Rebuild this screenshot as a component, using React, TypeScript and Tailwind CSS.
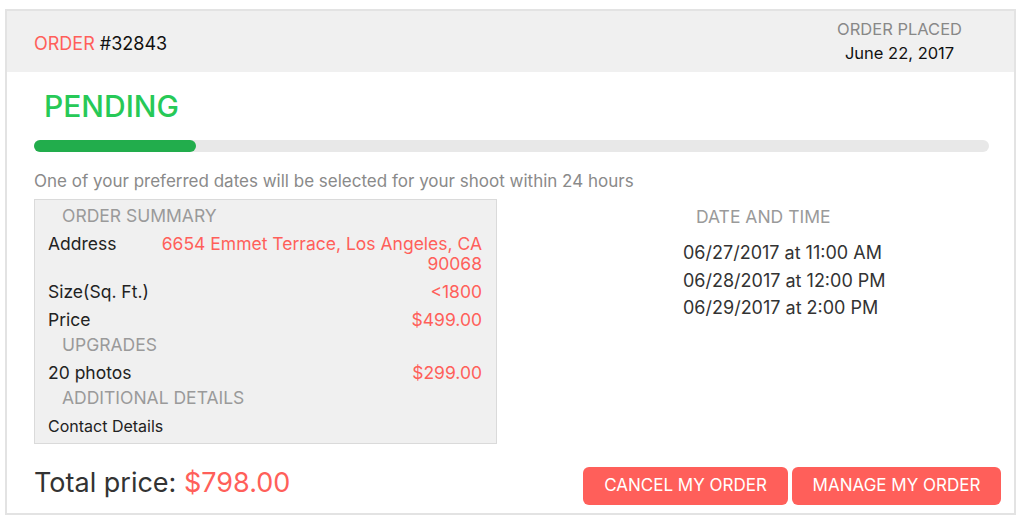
const font = { fontFamily: 'Inter, "Noto Sans", sans-serif' }

type Row = { kind: 'head'; text: string } | { kind: 'row'; label: string; value?: string; small?: boolean }

const summary: Row[] = [
  { kind: 'head', text: 'ORDER SUMMARY' },
  { kind: 'row', label: 'Address', value: '6654 Emmet Terrace, Los Angeles, CA 90068' },
  { kind: 'row', label: 'Size(Sq. Ft.)', value: '<1800' },
  { kind: 'row', label: 'Price', value: '$499.00' },
  { kind: 'head', text: 'UPGRADES' },
  { kind: 'row', label: '20 photos', value: '$299.00' },
  { kind: 'head', text: 'ADDITIONAL DETAILS' },
  { kind: 'row', label: 'Contact Details', small: true },
]

const dates = ['06/27/2017 at 11:00 AM', '06/28/2017 at 12:00 PM', '06/29/2017 at 2:00 PM']

export default function App() {
  return (
    <div className="w-[1024px] h-[523px] bg-white pt-[9px] pl-[5px]" style={font}>
      <div className="w-[1011px] h-[506px] border-2 border-[#e3e3e3] flex flex-col">
        {/* header */}
        <div className="h-[61px] bg-[#f0f0f0] flex items-center justify-between pl-[27px] pr-[52px]">
          <div className="pt-[4px] text-[18px] text-[#111]">
            <span className="text-[#ff5f5a]">ORDER</span> #32843
          </div>
          <div className="flex flex-col items-center pb-[2px]">
            <span className="text-[16.5px] leading-[24px] text-[#888]">ORDER PLACED</span>
            <span className="text-[16.5px] leading-[24px] text-[#111]">June 22, 2017</span>
          </div>
        </div>

        <div className="flex-1 flex flex-col pl-[27px]">
          <div className="pl-[10px] pt-[16px] text-[30px] leading-[36px] font-medium text-[#27c957]">PENDING</div>

          <div className="mt-[16px] mr-[25px] h-[12px] rounded-full bg-[#e8e8e8]">
            <div className="h-full w-[162px] rounded-full bg-[#22ad4c]" />
          </div>

          <div className="mt-[18px] text-[17px] leading-[22px] text-[#8a8a8a]">
            One of your preferred dates will be selected for your shoot within 24 hours
          </div>

          <div className="mt-[7px] flex">
            <div className="w-[463px] border border-[#dadada] bg-[#f0f0f0] pt-[5px] pb-[3px]">
              {summary.map((r, i) =>
                r.kind === 'head' ? (
                  <div key={i} className="pl-[27px] h-[22px] mb-[3px] flex items-center text-[17.5px] text-[#9a9a9a]">
                    {r.text}
                  </div>
                ) : (
                  <div key={i} className="flex justify-between gap-[40px] pl-[13px] pr-[14px] py-[4px]">
                    <span className={r.small ? 'text-[16px] leading-[20px] text-[#222]' : 'text-[17.5px] leading-[20px] text-[#222] whitespace-nowrap'}>
                      {r.label}
                    </span>
                    {r.value && (
                      <span className="text-[17.5px] leading-[20px] text-[#ff5f5a] text-right">{r.value}</span>
                    )}
                  </div>
                )
              )}
            </div>

            <div className="ml-[186px] flex flex-col pt-[7px]">
              <div className="pl-[13px] text-[17.5px] leading-[22px] text-[#9a9a9a]">DATE AND TIME</div>
              <div className="mt-[11px] flex flex-col">
                {dates.map((d) => (
                  <span key={d} className="text-[18px] leading-[27.5px] text-[#333]">
                    {d}
                  </span>
                ))}
              </div>
            </div>
          </div>

          <div className="mt-[19px] flex items-start justify-between pr-[13px]">
            <div className="text-[27px] leading-[40px] text-[#333]">
              Total price: <span className="text-[#ff5f5a]">$798.00</span>
            </div>
            <div className="mt-[4px] flex gap-[4px]">
              <button className="w-[205px] h-[38px] rounded-[6px] bg-[#ff5f5a] text-white text-[17px]">
                CANCEL MY ORDER
              </button>
              <button className="w-[209px] h-[38px] rounded-[6px] bg-[#ff5f5a] text-white text-[17px]">
                MANAGE MY ORDER
              </button>
            </div>
          </div>
        </div>
      </div>
    </div>
  )
}
